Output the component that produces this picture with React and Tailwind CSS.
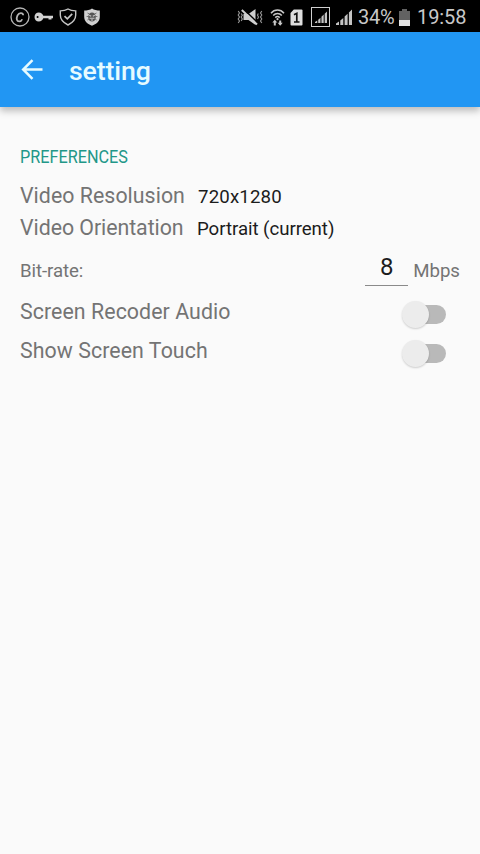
const LABEL = "text-[21.33px] leading-8 text-[#747474] whitespace-nowrap";
const VALUE = "pt-px text-[18.67px] leading-8 text-[#1c1c1c] whitespace-nowrap";

function CopyrightIcon() {
  return (
    <svg width="20" height="20" viewBox="0 0 20 20" fill="none" stroke="#b4b4b4">
      <circle cx="10" cy="10" r="9" strokeWidth="1.3" />
      <path d="M13.200 8.200C13 5.600 9.100 5.200 7.500 8.400 6 11.700 6.800 14.500 9.200 14.400c1.500 0 2.500-.8 3-2.100" strokeWidth="1.800" />
    </svg>
  );
}

function KeyIcon() {
  return (
    <svg width="20" height="12" viewBox="0 0 20 12">
      <path fillRule="evenodd" fill="#d2d2d2" d="M4.800 1.500C7.100 1.500 8.700 2.900 9.300 4.700H19v2.600h-1.500v1.200h-3V7.300H9.300C8.700 9.100 7.100 10.500 4.800 10.500 2.200 10.500.5 8.600.5 6s1.700-4.500 4.300-4.500zM3.600 5a1 1 0 1 0 0 2 1 1 0 0 0 0-2z" />
    </svg>
  );
}

function ShieldIcon() {
  return (
    <svg width="18" height="18" viewBox="0 0 18 18" fill="none" stroke="#c4c4c4">
      <path d="M9 1C7 2.300 4 2.900 1.300 2.900V7c0 4.600 3.200 7.800 7.700 10 4.500-2.200 7.700-5.400 7.700-10V2.900C14 2.900 11 2.300 9 1z" strokeWidth="1.400" />
      <path d="M5.500 8.200l2.800 2.700 4.900-5" strokeWidth="1.700" />
    </svg>
  );
}

function BugShieldIcon() {
  return (
    <svg width="18" height="18" viewBox="0 0 18 18">
      <path d="M9 .5C7 2 4 2.500 1.200 2.500V9c0 4.500 3.600 7 7.800 8.700 4.200-1.700 7.800-4.200 7.800-8.700V2.500C14 2.500 11 2 9 .5z" fill="#d0d0d0" />
      <path d="M4.500 5l2 1M13.500 5l-2 1M3.600 8.500h2M14.400 8.500h-2M4.400 12l1.600-1M13.600 12L12 11" stroke="#777" strokeWidth="1" />
      <ellipse cx="9" cy="9" rx="3.800" ry="4.500" fill="#555" />
      <path d="M6.200 7.300l2 1M11.800 7.300l-2 1M6.500 10.300h5M8 12h2" stroke="#c8c8c8" strokeWidth="1.100" />
    </svg>
  );
}

function MuteIcon() {
  return (
    <svg width="26" height="18" viewBox="0 0 26 18" fill="none">
      <path d="M6.500 6h5L18.500 1v16l-7-5h-5z" fill="#cfcfcf" />
      <path d="M6.200 .8L21 15" stroke="#000" strokeWidth="1.500" />
      <path d="M4.800 2L20 16.500" stroke="#cfcfcf" strokeWidth="2" />
      <path d="M1.200 3l1.300 2-1.300 2 1.300 2-1.300 2 1.300 2-1.300 2M4.200 5.500L5.300 7.300 4.200 9l1.100 2-1.100 2M24.800 3l-1.300 2 1.300 2-1.300 2 1.300 2-1.300 2 1.300 2M21.300 5.500L20.500 7.300l1 1.700-1 2" stroke="#9a9a9a" strokeWidth="1.100" />
    </svg>
  );
}

function WifiIcon() {
  return (
    <svg width="15" height="18" viewBox="0 0 15 18" fill="none" stroke="#c8c8c8">
      <path d="M1 5.200C4.500 1 10.500 1 14 5.200M3.200 7.500c2.300-2.700 6.300-2.700 8.600 0M5.300 9.600c1.300-1.300 3.100-1.300 4.400 0" strokeWidth="1.500" />
      <circle cx="7.500" cy="11.200" r="1.100" fill="#c8c8c8" stroke="none" />
      <path d="M4.800 17.500v-4M10.200 12.500v4" strokeWidth="2" />
      <path d="M2.300 14.500L4.800 11.700l2.500 2.800zM7.700 14.700h5L10.200 17.700z" fill="#c8c8c8" stroke="none" />
    </svg>
  );
}

function SimIcon() {
  return (
    <svg width="13" height="17" viewBox="0 0 13 17">
      <path d="M3.800.5H11.500a1 1 0 0 1 1 1v14a1 1 0 0 1-1 1h-10a1 1 0 0 1-1-1V4z" fill="#dedede" />
      <path d="M4 5.800L6.800 4.300v8.500M4 13h5.500" fill="none" stroke="#111" strokeWidth="1.700" />
    </svg>
  );
}

function Bars({ size }) {
  return (
    <svg width={size} height={size} viewBox="0 0 16 16">
      <path d="M0 14.500L3 12.500V16H0zM4.300 11.500l3-2.500V16h-3zM8.600 7.500l3-2.700V16h-3zM12.900 3.500L16 .5V16h-3.100z" fill="#c4c4c4" />
    </svg>
  );
}

function StatusBar() {
  return (
    <header className="flex h-8 items-center bg-black pt-[2px] pl-[10px]">
      <CopyrightIcon />
      <span className="ml-1"><KeyIcon /></span>
      <span className="ml-[5px]"><ShieldIcon /></span>
      <span className="ml-[6px]"><BugShieldIcon /></span>
      <div className="ml-[136px] flex items-center">
        <MuteIcon />
        <span className="ml-[7px]"><WifiIcon /></span>
        <span className="ml-[5px]"><SimIcon /></span>
        <span className="ml-[8px] flex h-[20px] w-[19px] items-center justify-center border border-[#d0d0d0]">
          <Bars size={12} />
        </span>
        <span className="ml-[6px]"><Bars size={16} /></span>
      </div>
      <span className="ml-[6px] w-[38px] text-[20px] leading-7 tracking-[-0.2px] text-[#c8c8c8]">34%</span>
      <svg className="ml-[3px]" width="11" height="17" viewBox="0 0 11 17">
        <path d="M3 0h5v2h3v9H0V2h3z" fill="#626262" />
        <path d="M0 11h11v6H0z" fill="#e2e2e2" />
      </svg>
      <span className="ml-[7px] text-[20px] leading-7 tracking-[-0.1px] text-[#c8c8c8]">19:58</span>
    </header>
  );
}

function Toggle() {
  return (
    <button type="button" role="switch" aria-checked="false" className="mt-[4px] flex w-[44px] items-center">
      <span className="z-10 size-[27px] shrink-0 rounded-full bg-[#ececec] shadow-[0_1px_2px_rgba(0,0,0,0.18)]" />
      <span className="-ml-[14px] h-[19px] w-[31px] shrink-0 rounded-full bg-[#b9b9b9]" />
    </button>
  );
}

export default function App() {
  return (
    <div className="flex h-[854px] w-[480px] flex-col overflow-hidden bg-[#fafafa] font-[Roboto,sans-serif]">
      <StatusBar />
      <nav className="flex h-[75px] shrink-0 items-center bg-[#2196f3] pl-[21px] shadow-[0_4px_7px_rgba(0,0,0,0.25)]">
        <svg width="22" height="22" viewBox="0 0 22 22" fill="none" stroke="#e6fbff" strokeWidth="2.500">
          <path d="M21.500 10.500H2.500M11.500 1.200L2.200 10.500l9.300 9.300" />
        </svg>
        <h1 className="ml-[26px] pt-[3px] text-[26.67px] font-medium leading-8 tracking-[-0.1px] text-[#e6fbff]">setting</h1>
      </nav>
      <main className="flex flex-col pl-5">
        <h2 className="mt-[38px] h-6 origin-left scale-x-[0.87] text-[18.67px] leading-6 text-[#229788]">PREFERENCES</h2>
        <div className="mt-[11px] flex h-8 items-center">
          <span className={LABEL + " w-[178px] tracking-[0.04px]"}>Video Resolusion</span>
          <span className={VALUE + " tracking-[0.15px]"}>720x1280</span>
        </div>
        <div className="flex h-8 items-center">
          <span className={LABEL + " w-[177px] tracking-[-0.05px]"}>Video Orientation</span>
          <span className={VALUE + " tracking-[-0.05px]"}>Portrait (current)</span>
        </div>
        <div className="flex h-[44px] items-center pr-5">
          <span className="pt-[9px] text-[18.67px] leading-6 tracking-[-0.1px] text-[#747474]">Bit-rate:</span>
          <span className="mt-[5px] ml-auto h-[35px] w-[43px] border-b-[1.500px] border-[#8a8a8a] text-center text-[24px] leading-[32px] text-[#1c1c1c]">8</span>
          <span className="ml-[5px] pt-[9px] text-[18.67px] leading-6 text-[#747474]">Mbps</span>
        </div>
        <div className="mt-[5px] flex h-[38px] items-center justify-between pr-[34px]">
          <span className={LABEL + " tracking-[0.07px]"}>Screen Recoder Audio</span>
          <Toggle />
        </div>
        <div className="mt-px flex h-[38px] items-center justify-between pr-[34px]">
          <span className={LABEL + " tracking-[0.07px]"}>Show Screen Touch</span>
          <Toggle />
        </div>
      </main>
    </div>
  );
}
